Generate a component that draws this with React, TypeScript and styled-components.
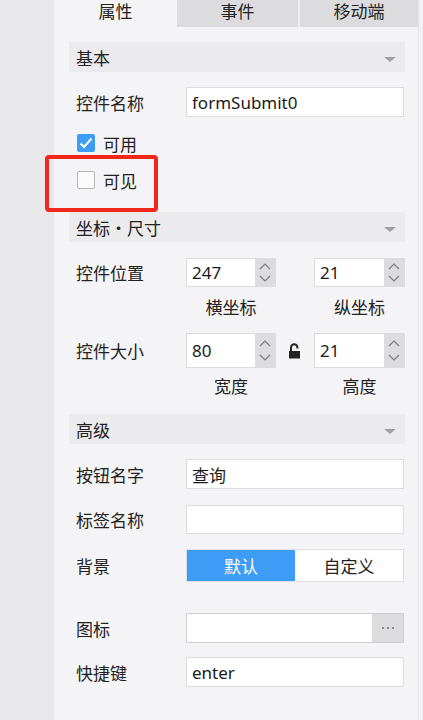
import React from "react";
import styled, { createGlobalStyle } from "styled-components";

const Global = createGlobalStyle`
  html, body { margin: 0; padding: 0; background: #f2f2f4; }
  body { font-family: "Noto Sans", "Noto Sans CJK SC", sans-serif; color: #222; }
  * { box-sizing: border-box; }
`;

const Page = styled.div`
  position: relative;
  display: flex;
  width: 423px;
  height: 720px;
  overflow: hidden;
  background: #f2f2f4;
`;

const Gutter = styled.div`
  flex: none;
  width: 54px;
  background: #e8e8ea;
`;

const Panel = styled.div`
  flex: none;
  width: 365px;
  background: #f4f4f6;
  border-right: 1px solid #e2e2e4;
  display: flex;
  flex-direction: column;
`;

const Tabs = styled.div`
  display: flex;
  height: 27px;
  background: #eeeef0;
`;

const Tab = styled.div<{ $active?: boolean; $w: number; $gap?: number }>`
  flex: none;
  width: ${(p) => p.$w}px;
  margin-left: ${(p) => p.$gap ?? 0}px;
  background: ${(p) => (p.$active ? "#f4f4f6" : "#dcdcdf")};
  font-size: 17px;
  line-height: 23px;
  text-align: center;
  color: #222;
`;

const Body = styled.div`
  display: flex;
  flex-direction: column;
  padding: 0 13px 0 15px;
`;

const SectionHeader = styled.div<{ $mt: number }>`
  margin-top: ${(p) => p.$mt}px;
  height: 30px;
  background: #ebebed;
  display: flex;
  align-items: center;
  justify-content: space-between;
  padding: 0 9px 0 7px;
  font-size: 17px;
  color: #222;
`;

const Caret = styled.span`
  width: 0;
  height: 0;
  border-left: 6px solid transparent;
  border-right: 6px solid transparent;
  border-top: 5px solid #a0a0a2;
  margin-top: 4px;
`;

const Row = styled.div<{ $mt: number; $h: number }>`
  margin-top: ${(p) => p.$mt}px;
  height: ${(p) => p.$h}px;
  display: flex;
  align-items: center;
`;

const Label = styled.div`
  flex: none;
  width: 117px;
  padding-left: 7px;
  font-size: 17px;
  color: #222;
`;

const TextInput = styled.div`
  flex: none;
  width: 218px;
  height: 100%;
  background: #fff;
  border: 1px solid #dcdcde;
  display: flex;
  align-items: center;
  padding-left: 5px;
  font-size: 17px;
  color: #1a1a1a;
`;

const CheckRow = styled.div<{ $mt: number }>`
  margin-top: ${(p) => p.$mt}px;
  height: 20px;
  display: flex;
  align-items: center;
  padding-left: 8px;
  gap: 8px;
  font-size: 17px;
`;

const Box = styled.span<{ $checked?: boolean }>`
  flex: none;
  width: 18px;
  height: 18px;
  border-radius: 2px;
  background: ${(p) => (p.$checked ? "#3d9cf5" : "#fafafa")};
  border: ${(p) => (p.$checked ? "none" : "1.5px solid #b4b4b6")};
  display: flex;
  align-items: center;
  justify-content: center;
`;

const SpinGroup = styled.div`
  display: flex;
  align-items: center;
  height: 100%;
`;

const Spinner = styled.div<{ $w: number }>`
  flex: none;
  width: ${(p) => p.$w}px;
  height: 100%;
  display: flex;
  border: 1px solid #dcdcde;
  background: #fff;
`;

const SpinValue = styled.div`
  flex: 1;
  display: flex;
  align-items: center;
  padding-left: 5px;
  font-size: 17px;
  color: #1a1a1a;
`;

const SpinButtons = styled.div`
  flex: none;
  width: 20px;
  background: #dcdcde;
  display: flex;
  flex-direction: column;
  align-items: center;
  justify-content: space-around;
  padding: 2px 0;
`;

const LockSlot = styled.div`
  flex: none;
  width: 38px;
  display: flex;
  justify-content: center;
  align-items: center;
`;

const CaptionRow = styled.div<{ $mt: number }>`
  margin-top: ${(p) => p.$mt}px;
  height: 20px;
  display: flex;
  padding-left: 117px;
  font-size: 17px;
  line-height: 20px;
  color: #222;
`;

const Caption = styled.div<{ $w: number }>`
  flex: none;
  width: ${(p) => p.$w}px;
  text-align: center;
`;

const Segmented = styled.div`
  flex: none;
  width: 218px;
  height: 100%;
  display: flex;
  border: 1px solid #e0e0e2;
  background: #fff;
`;

const Segment = styled.div<{ $active?: boolean }>`
  flex: 1;
  display: flex;
  align-items: center;
  justify-content: center;
  font-size: 17px;
  background: ${(p) => (p.$active ? "#3d9cf5" : "#fff")};
  color: ${(p) => (p.$active ? "#fff" : "#222")};
`;

const PickInput = styled.div`
  flex: none;
  width: 218px;
  height: 100%;
  display: flex;
  border: 1px solid #cfcfd1;
`;

const PickField = styled.div`
  flex: 1;
  background: #fff;
`;

const PickButton = styled.div`
  flex: none;
  width: 31px;
  background: #dcdcde;
  display: flex;
  align-items: center;
  justify-content: center;
  gap: 3px;
`;

const Dot = styled.span`
  width: 2px;
  height: 2px;
  background: #8a8a8c;
`;

const Highlight = styled.div`
  position: absolute;
  left: 45px;
  top: 155px;
  width: 113px;
  height: 57px;
  border: 4px solid #f2271c;
  border-radius: 4px;
  pointer-events: none;
`;

const Chevron = ({ up }: { up?: boolean }) => (
  <svg width="12" height="7" viewBox="0 0 12 7">
    <path
      d={up ? "M1 6 L6 1 L11 6" : "M1 1 L6 6 L11 1"}
      fill="none"
      stroke="#7c7c7e"
      strokeWidth="1.2"
    />
  </svg>
);

const Spin = ({ value, w }: { value: string; w: number }) => (
  <Spinner $w={w}>
    <SpinValue>{value}</SpinValue>
    <SpinButtons>
      <Chevron up />
      <Chevron />
    </SpinButtons>
  </Spinner>
);

const Lock = () => (
  <svg width="14" height="16" viewBox="0 0 14 16">
    <path d="M3 8 V4.5 A3.2 3.2 0 0 1 9.4 4.5 V5.5" fill="none" stroke="#222" strokeWidth="2" />
    <rect x="1" y="8" width="11" height="7.5" fill="#222" />
  </svg>
);

export default function App() {
  return (
    <Page>
      <Global />
      <Gutter />
      <Panel>
        <Tabs>
          <Tab $active $w={123}>属性</Tab>
          <Tab $w={121}>事件</Tab>
          <Tab $w={118} $gap={2}>移动端</Tab>
        </Tabs>
        <Body>
          <SectionHeader $mt={15}>
            <span>基本</span>
            <Caret />
          </SectionHeader>
          <Row $mt={15} $h={30}>
            <Label>控件名称</Label>
            <TextInput>formSubmit0</TextInput>
          </Row>
          <CheckRow $mt={16}>
            <Box $checked>
              <svg width="14" height="12" viewBox="0 0 14 12">
                <path d="M1.5 6.5 L5 10 L12.5 1.5" fill="none" stroke="#fff" strokeWidth="2" />
              </svg>
            </Box>
            <span>可用</span>
          </CheckRow>
          <CheckRow $mt={17}>
            <Box />
            <span>可见</span>
          </CheckRow>
          <SectionHeader $mt={22}>
            <span>坐标・尺寸</span>
            <Caret />
          </SectionHeader>
          <Row $mt={16} $h={29}>
            <Label>控件位置</Label>
            <SpinGroup>
              <Spin value="247" w={90} />
              <LockSlot />
              <Spin value="21" w={91} />
            </SpinGroup>
          </Row>
          <CaptionRow $mt={11}>
            <Caption $w={90}>横坐标</Caption>
            <Caption $w={38} />
            <Caption $w={91}>纵坐标</Caption>
          </CaptionRow>
          <Row $mt={15} $h={35}>
            <Label>控件大小</Label>
            <SpinGroup>
              <Spin value="80" w={90} />
              <LockSlot>
                <Lock />
              </LockSlot>
              <Spin value="21" w={91} />
            </SpinGroup>
          </Row>
          <CaptionRow $mt={9}>
            <Caption $w={90}>宽度</Caption>
            <Caption $w={38} />
            <Caption $w={91}>高度</Caption>
          </CaptionRow>
          <SectionHeader $mt={17}>
            <span>高级</span>
            <Caret />
          </SectionHeader>
          <Row $mt={15} $h={30}>
            <Label>按钮名字</Label>
            <TextInput>查询</TextInput>
          </Row>
          <Row $mt={16} $h={29}>
            <Label>标签名称</Label>
            <TextInput />
          </Row>
          <Row $mt={15} $h={33}>
            <Label>背景</Label>
            <Segmented>
              <Segment $active>默认</Segment>
              <Segment>自定义</Segment>
            </Segmented>
          </Row>
          <Row $mt={31} $h={30}>
            <Label>图标</Label>
            <PickInput>
              <PickField />
              <PickButton>
                <Dot />
                <Dot />
                <Dot />
              </PickButton>
            </PickInput>
          </Row>
          <Row $mt={14} $h={30}>
            <Label>快捷键</Label>
            <TextInput>enter</TextInput>
          </Row>
        </Body>
      </Panel>
      <Highlight />
    </Page>
  );
}
